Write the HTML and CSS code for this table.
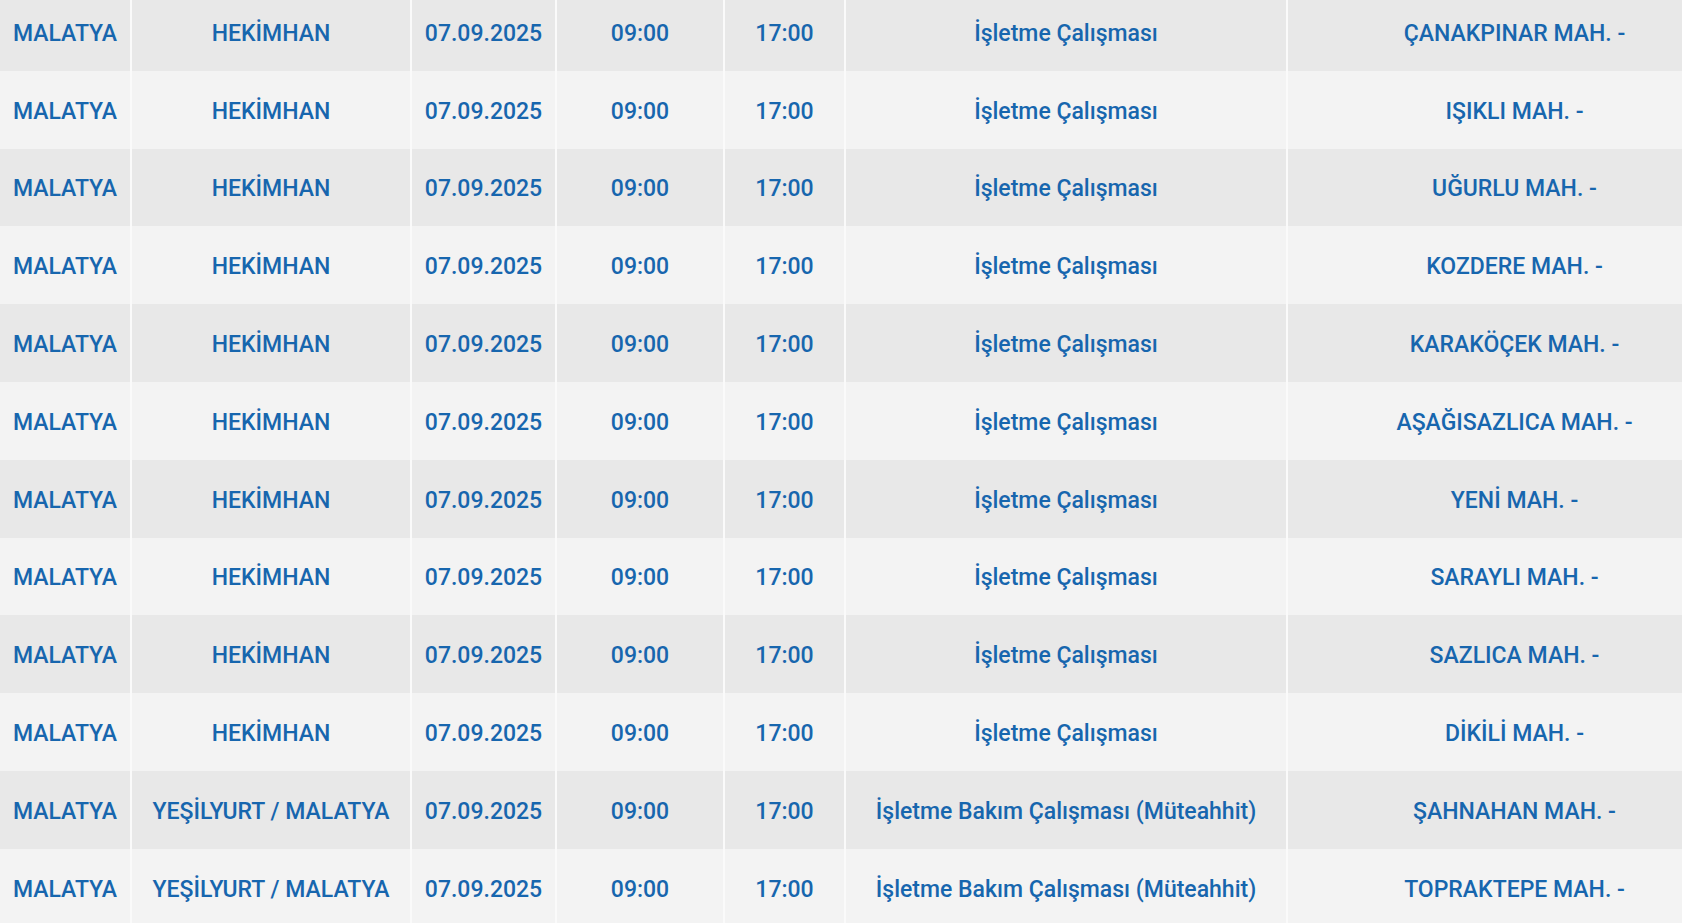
FILE: index.html
```html
<!DOCTYPE html>
<html lang="tr">
<head>
<meta charset="utf-8">
<title>Planlı Kesintiler</title>
<link rel="stylesheet" href="styles.css">
</head>
<body>
<div class="wrap">
<table class="outages">
  <colgroup>
    <col class="c-il"><col class="c-ilce"><col class="c-tarih"><col class="c-bas"><col class="c-bit"><col class="c-neden"><col class="c-yer">
  </colgroup>
  <tbody>
    <tr><td>MALATYA</td><td>HEKİMHAN</td><td>07.09.2025</td><td>09:00</td><td>17:00</td><td>İşletme Çalışması</td><td>ÇANAKPINAR MAH. -</td></tr>
    <tr><td>MALATYA</td><td>HEKİMHAN</td><td>07.09.2025</td><td>09:00</td><td>17:00</td><td>İşletme Çalışması</td><td>IŞIKLI MAH. -</td></tr>
    <tr><td>MALATYA</td><td>HEKİMHAN</td><td>07.09.2025</td><td>09:00</td><td>17:00</td><td>İşletme Çalışması</td><td>UĞURLU MAH. -</td></tr>
    <tr><td>MALATYA</td><td>HEKİMHAN</td><td>07.09.2025</td><td>09:00</td><td>17:00</td><td>İşletme Çalışması</td><td>KOZDERE MAH. -</td></tr>
    <tr><td>MALATYA</td><td>HEKİMHAN</td><td>07.09.2025</td><td>09:00</td><td>17:00</td><td>İşletme Çalışması</td><td>KARAKÖÇEK MAH. -</td></tr>
    <tr><td>MALATYA</td><td>HEKİMHAN</td><td>07.09.2025</td><td>09:00</td><td>17:00</td><td>İşletme Çalışması</td><td>AŞAĞISAZLICA MAH. -</td></tr>
    <tr><td>MALATYA</td><td>HEKİMHAN</td><td>07.09.2025</td><td>09:00</td><td>17:00</td><td>İşletme Çalışması</td><td>YENİ MAH. -</td></tr>
    <tr><td>MALATYA</td><td>HEKİMHAN</td><td>07.09.2025</td><td>09:00</td><td>17:00</td><td>İşletme Çalışması</td><td>SARAYLI MAH. -</td></tr>
    <tr><td>MALATYA</td><td>HEKİMHAN</td><td>07.09.2025</td><td>09:00</td><td>17:00</td><td>İşletme Çalışması</td><td>SAZLICA MAH. -</td></tr>
    <tr><td>MALATYA</td><td>HEKİMHAN</td><td>07.09.2025</td><td>09:00</td><td>17:00</td><td>İşletme Çalışması</td><td>DİKİLİ MAH. -</td></tr>
    <tr><td>MALATYA</td><td>YEŞİLYURT / MALATYA</td><td>07.09.2025</td><td>09:00</td><td>17:00</td><td>İşletme Bakım Çalışması (Müteahhit)</td><td>ŞAHNAHAN MAH. -</td></tr>
    <tr><td>MALATYA</td><td>YEŞİLYURT / MALATYA</td><td>07.09.2025</td><td>09:00</td><td>17:00</td><td>İşletme Bakım Çalışması (Müteahhit)</td><td>TOPRAKTEPE MAH. -</td></tr>
  </tbody>
</table>
</div>
</body>
</html>
```

FILE: styles.css
```css
html, body {
  margin: 0;
  padding: 0;
  background: #f3f3f3;
}
body {
  overflow: hidden;
  height: 923px;
  font-family: Roboto, "Liberation Sans", sans-serif;
}
.wrap {
  width: 1741px;
  margin-top: -7px;
}
.outages {
  border-collapse: collapse;
  table-layout: fixed;
  width: 1741px;
}
.c-il { width: 131px; }
.c-ilce { width: 280px; }
.c-tarih { width: 145px; }
.c-bas { width: 168px; }
.c-bit { width: 121px; }
.c-neden { width: 442px; }
.c-yer { width: 454px; }

.outages tr {
  height: 77.8px;
}
.outages tr:nth-child(odd) {
  background: #e8e8e8;
}
.outages tr:nth-child(even) {
  background: #f3f3f3;
}
.outages td {
  padding: 3px 0 0 0;
  text-align: center;
  vertical-align: middle;
  white-space: nowrap;
  color: #1766ae;
  font-size: 23px;
  font-weight: 500;
  border-left: 2px solid #fafafa;
}
.outages td:first-child {
  border-left: none;
}
```
